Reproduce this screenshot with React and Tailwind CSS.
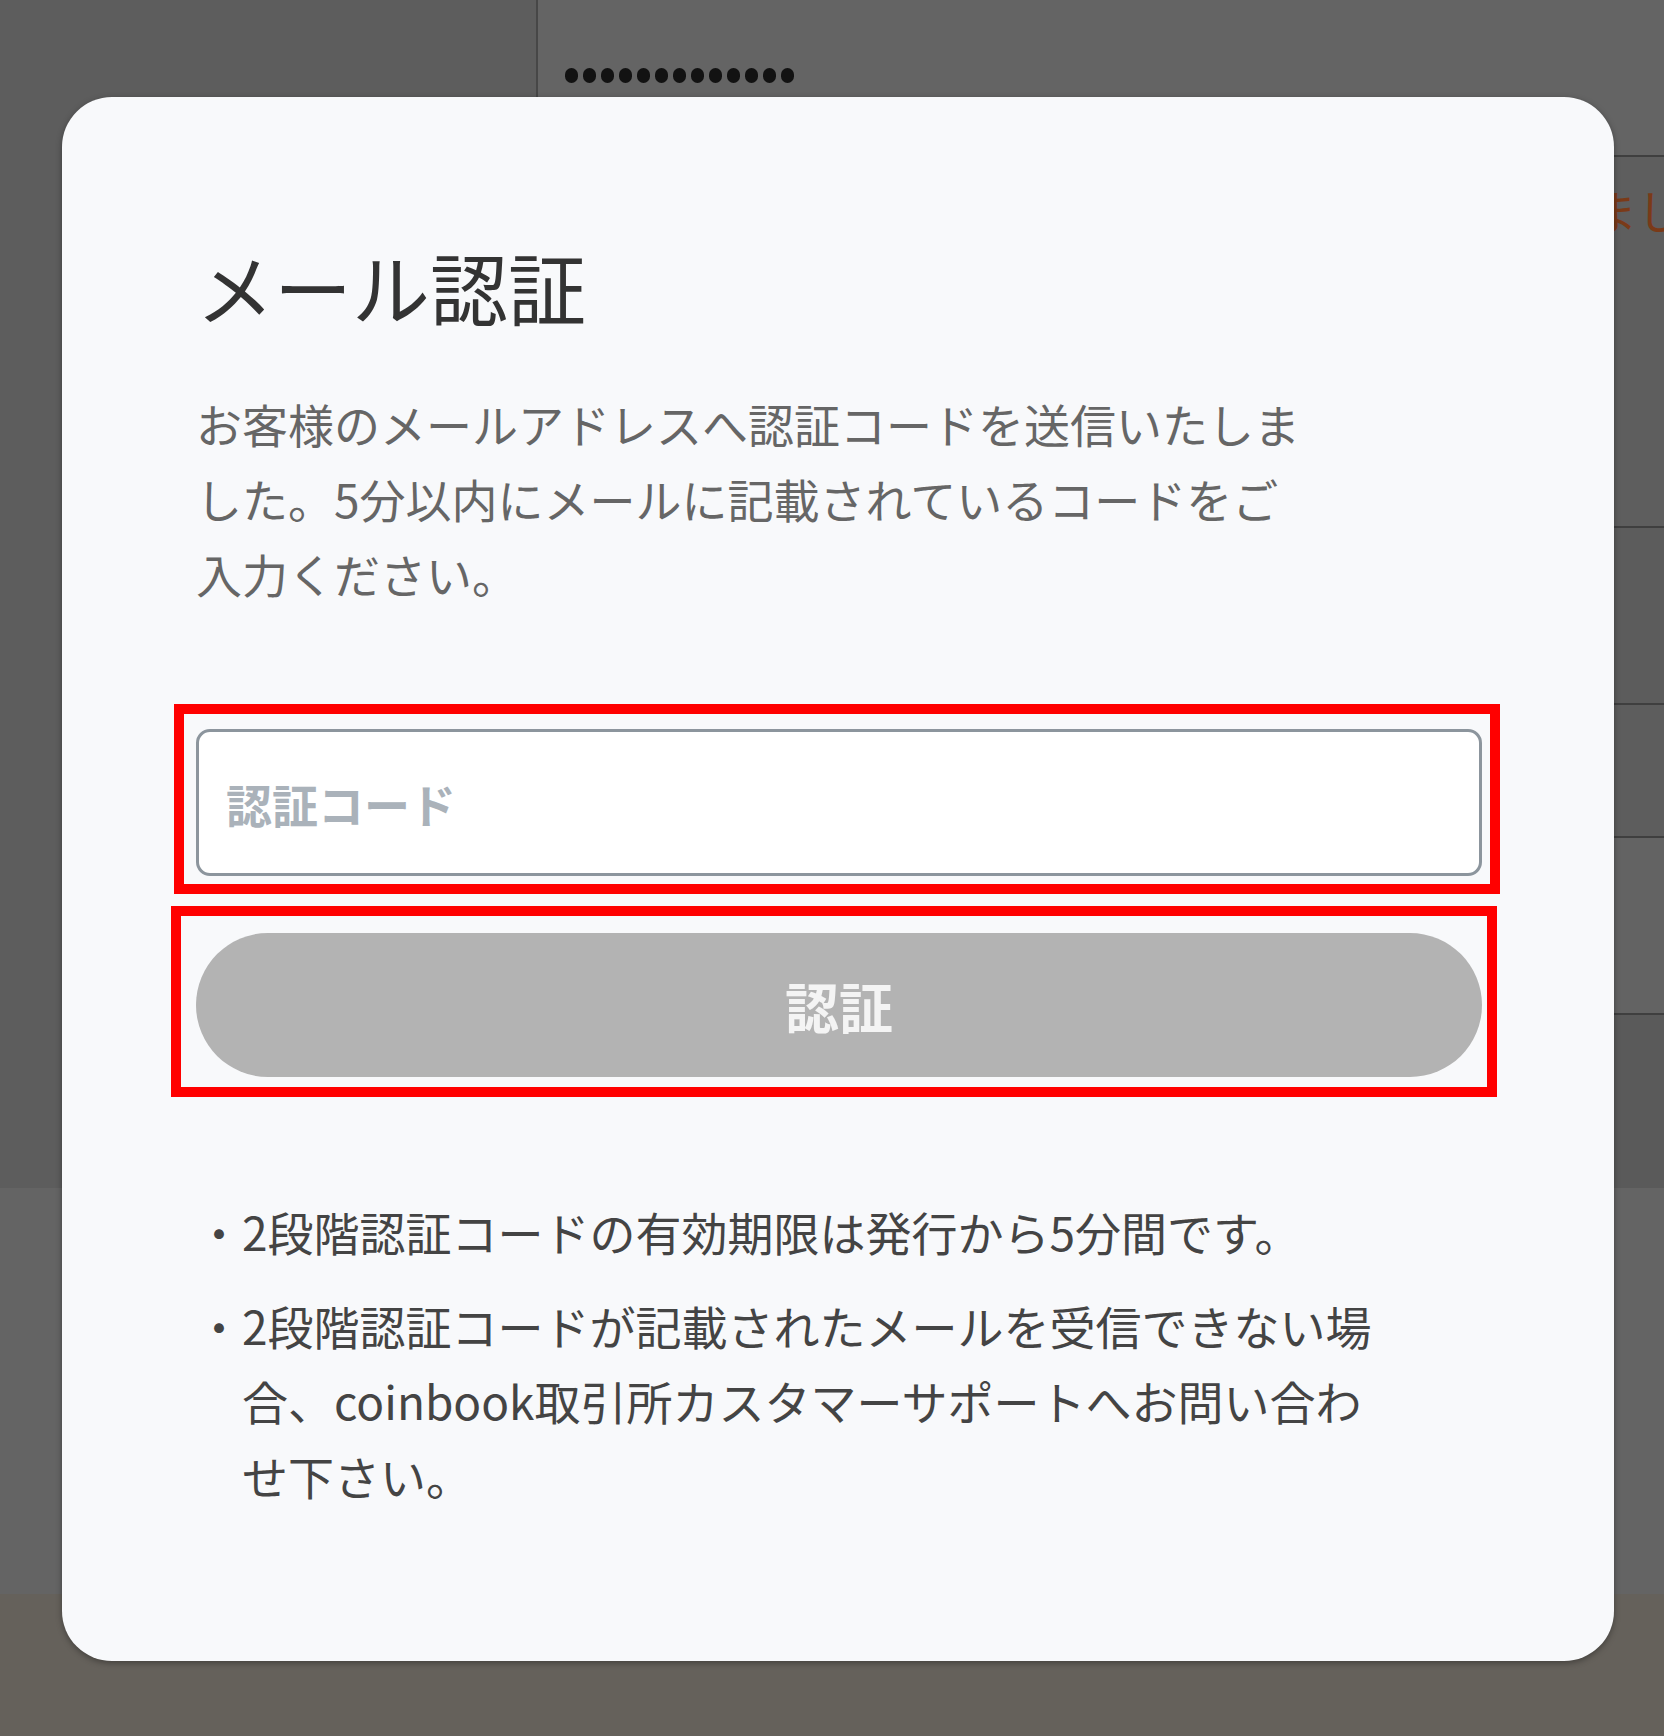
const FONT = "font-['Noto_Sans_CJK_JP','Noto_Sans',sans-serif]";

function Dots({ count }) {
  return (
    <div className="flex gap-[5px]">
      {Array.from({ length: count }).map((_, i) => (
        <span key={i} className="block w-[13px] h-[15px] rounded-full bg-[#121212]" />
      ))}
    </div>
  );
}

function Backdrop() {
  return (
    <div className="flex flex-col h-full">
      <div className="flex h-[1188px]">
        <div className="w-[536px] shrink-0 bg-[#5d5d5d]" />
        <div className="w-[2px] shrink-0 bg-[#474747]" />
        <div className="flex-1 min-w-0 overflow-hidden flex flex-col bg-[#5e5e5e]">
          <div className="h-[155px] bg-[#646464] pl-[27px] pt-[68px]">
            <Dots count={13} />
          </div>
          <div className="h-[371px] border-t-2 border-[#3f3f3f] pl-[1053px] pt-[22px]">
            <span className="whitespace-nowrap text-[46px] leading-[60px] text-[#7a3a18]">ました</span>
          </div>
          <div className="h-[177px] border-t-2 border-[#3f3f3f] bg-[#5c5c5c]" />
          <div className="h-[133px] border-t-2 border-[#3f3f3f] bg-[#5d5d5d]" />
          <div className="h-[177px] border-t-2 border-[#3f3f3f] bg-[#636363]" />
          <div className="flex-1 border-t-2 border-[#3f3f3f] bg-[#5a5a5a]" />
        </div>
      </div>
      <div className="h-[406px] bg-[#646464]" />
      <div className="flex-1 bg-[#65615b]" />
    </div>
  );
}

const notes = [
  "2段階認証コードの有効期限は発行から5分間です。",
  "2段階認証コードが記載されたメールを受信できない場合、coinbook取引所カスタマーサポートへお問い合わせ下さい。",
];

function VerifyModal() {
  return (
    <div className="absolute left-[62px] top-[97px] w-[1552px] h-[1564px] rounded-[50px] bg-[#f8f9fb] shadow-[0_2px_6px_rgba(0,0,0,0.35)] pl-[134px] pr-[132px] pt-[150px] flex flex-col">
      <h1 className="text-[78px] leading-[78px] text-[#333333] font-normal">メール認証</h1>
      <p className="mt-[61px] w-[1112px] text-[46px] leading-[75px] text-[#666666]">
        お客様のメールアドレスへ認証コードを送信いたしました。5分以内にメールに記載されているコードをご入力ください。
      </p>

      <div className="mt-[93px] -ml-[22px] -mr-[18px] border-[10px] border-[#ff0000] pl-[12px] pr-[8px] pt-[15px] pb-[8px]">
        <input
          type="text"
          placeholder="認証コード"
          className="block w-full h-[147px] rounded-[14px] border-[3px] border-[#8c959d] bg-white pl-[27px] text-[46px] font-bold text-[#333] placeholder:text-[#aab2ba] outline-none"
        />
      </div>

      <div className="mt-[12px] -ml-[25px] -mr-[15px] border-[10px] border-[#ff0000] pl-[15px] pr-[5px] pt-[17px] pb-[10px]">
        <button
          type="button"
          disabled
          className="flex items-center justify-center w-full h-[144px] rounded-full bg-[#b3b3b3] text-[54px] font-bold text-[#f4f4f4]"
        >
          認証
        </button>
      </div>

      <ul className="mt-[97px] flex flex-col gap-[19px] text-[46px] leading-[75px] text-[#444444]">
        {notes.map((n, i) => (
          <li key={i} className="flex">
            <span className="w-[46px] shrink-0">・</span>
            <span className="w-[1150px]">{n}</span>
          </li>
        ))}
      </ul>
    </div>
  );
}

export default function App() {
  return (
    <div className={`relative w-[1664px] h-[1736px] overflow-hidden ${FONT}`}>
      <Backdrop />
      <VerifyModal />
    </div>
  );
}
